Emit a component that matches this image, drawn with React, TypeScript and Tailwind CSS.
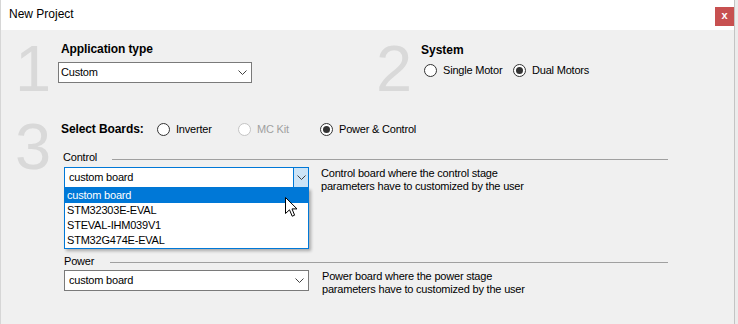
import React from "react";

const font = { fontFamily: '"Liberation Sans", Arial, sans-serif' };

function Chevron() {
  return (
    <svg width="9" height="5" viewBox="0 0 9 5" className="block">
      <polyline points="0.5,0.5 4.5,4.5 8.5,0.5" fill="none" stroke="#404040" strokeWidth="1" />
    </svg>
  );
}

function Radio({ checked = false, disabled = false, label, width }: { checked?: boolean; disabled?: boolean; label: string; width: string }) {
  return (
    <div className={`flex items-center h-[15px] ${width}`}>
      <div
        className={`w-[13px] h-[13px] rounded-full border bg-white flex items-center justify-center shrink-0 ${
          disabled ? "border-[#c4c4c4] bg-[#f7f7f7]" : "border-[#333333]"
        }`}
      >
        {checked && <div className="w-[7px] h-[7px] rounded-full bg-[#333333]" />}
      </div>
      <span
        className={`ml-[6px] text-[11px] leading-[15px] tracking-[-0.2px] whitespace-nowrap ${
          disabled ? "text-[#a0a0a0]" : "text-black"
        }`}
      >
        {label}
      </span>
    </div>
  );
}

function Digit({ d }: { d: string }) {
  return <div className="text-[65px] leading-none text-[#d9d9d9]">{d}</div>;
}

export default function App() {
  return (
    <div className="w-[738px] h-[324px] flex overflow-hidden bg-[#ececec]" style={font}>
      <div className="w-px h-full bg-[#d6d6d6]" />
      <div className="w-[733px] h-full flex flex-col">
        {/* title bar */}
        <div className="h-[30px] bg-white flex items-start justify-between">
          <div className="pl-[8px] pt-[7px] text-[12px] leading-[15px] text-black">New Project</div>
          <div className="mt-[7px] w-[19px] h-[19px] bg-[#c75050] flex items-center justify-center text-white text-[11px] font-bold leading-none pb-[2px]">
            x
          </div>
        </div>
        {/* body */}
        <div className="flex-1 bg-[#f0f0f0] flex flex-col">
          {/* row 1 + 2 */}
          <div className="flex h-[80px]">
            <div className="w-[369px] flex">
              <div className="w-[57px] pl-[14px] pt-[6px]">
                <Digit d="1" />
              </div>
              <div className="flex flex-col pt-[12px]">
                <div className="text-[12px] font-bold leading-[15px] text-black pl-[3px] tracking-[-0.1px]">Application type</div>
                <div className="mt-[5px] w-[194px] h-[21px] bg-white border border-[#7a7a7a] flex items-center justify-between">
                  <span className="pl-[2px] text-[11px] leading-[13px] tracking-[-0.2px] text-black">Custom</span>
                  <span className="pr-[4px]">
                    <Chevron />
                  </span>
                </div>
              </div>
            </div>
            <div className="flex">
              <div className="w-[51px] pl-[6px] pt-[6px]">
                <Digit d="2" />
              </div>
              <div className="flex flex-col pt-[13px]">
                <div className="text-[12px] font-bold leading-[15px] text-black">System</div>
                <div className="mt-[5px] ml-[3px] flex">
                  <Radio label="Single Motor" width="w-[89px]" />
                  <Radio label="Dual Motors" checked width="w-[90px]" />
                </div>
              </div>
            </div>
          </div>
          {/* row 3 */}
          <div className="flex">
            <div className="w-[57px] pl-[14px] pt-[4px]">
              <Digit d="3" />
            </div>
            <div className="flex flex-col pt-[12px]">
              <div className="flex items-center h-[15px]">
                <div className="w-[99px] pl-[3px] text-[12px] font-bold leading-[15px] tracking-[-0.1px] text-black whitespace-nowrap">
                  Select Boards:
                </div>
                <Radio label="Inverter" width="w-[81px]" />
                <Radio label="MC Kit" disabled width="w-[82px]" />
                <Radio label="Power & Control" checked width="w-[100px]" />
              </div>

              {/* Control group */}
              <div className="mt-[13px] flex items-start h-[15px]">
                <div className="w-[54px] pl-[5px] text-[11px] leading-[15px] tracking-[-0.2px] text-black">Control</div>
                <div className="mt-[9px] w-[556px] h-px bg-[#a0a0a0]" />
              </div>
              <div className="mt-[2px] flex items-start">
                <div className="relative ml-[6px]">
                  <div className="w-[245px] h-[21px] bg-white border border-[#0078d7] flex items-center justify-between">
                    <span className="pl-[4px] text-[11px] leading-[13px] tracking-[-0.2px] text-black">custom board</span>
                    <div className="w-[16px] h-[21px] -mr-px -my-px bg-[#cce4f7] border border-[#0078d7] flex items-center justify-center">
                      <Chevron />
                    </div>
                  </div>
                  <div className="absolute left-0 top-[21px] w-[245px] bg-white border border-t-0 border-[#0078d7] shadow-[2px_2px_3px_rgba(0,0,0,0.3)] z-10 text-[11px] leading-[15px] tracking-[-0.2px]">
                    <div className="h-[15px] bg-[#0078d7] text-white pl-[2px]">custom board</div>
                    <div className="h-[15px] text-black pl-[2px]">STM32303E-EVAL</div>
                    <div className="h-[15px] text-black pl-[2px]">STEVAL-IHM039V1</div>
                    <div className="h-[15px] text-black pl-[2px]">STM32G474E-EVAL</div>
                  </div>
                  {/* mouse cursor */}
                  <svg
                    className="absolute left-[221px] top-[30px] z-20"
                    width="13"
                    height="21"
                    viewBox="0 0 13 21"
                  >
                    <path
                      d="M0.5 0.5 L0.5 16.5 L4.5 12.8 L7.2 19.2 L9.6 18.2 L7 11.9 L12 11.9 Z"
                      fill="white"
                      stroke="black"
                      strokeWidth="1"
                      strokeLinejoin="miter"
                    />
                  </svg>
                </div>
                <div className="ml-[12px] text-[11px] leading-[13px] tracking-[-0.2px] text-black">
                  <div>Control board where the control stage</div>
                  <div>parameters have to customized by the user</div>
                </div>
              </div>

              {/* Power group */}
              <div className="mt-[61px] flex items-start h-[15px]">
                <div className="w-[52px] pl-[6px] text-[11px] leading-[15px] tracking-[-0.2px] text-black">Power</div>
                <div className="mt-[8px] w-[558px] h-px bg-[#a0a0a0]" />
              </div>
              <div className="mt-[1px] flex items-start">
                <div className="ml-[6px] w-[245px] h-[21px] bg-white border border-[#7a7a7a] flex items-center justify-between">
                  <span className="pl-[4px] text-[11px] leading-[13px] tracking-[-0.2px] text-black">custom board</span>
                  <span className="pr-[4px]">
                    <Chevron />
                  </span>
                </div>
                <div className="ml-[13px] text-[11px] leading-[13px] tracking-[-0.2px] text-black">
                  <div>Power board where the power stage</div>
                  <div>parameters have to customized by the user</div>
                </div>
              </div>
            </div>
          </div>
        </div>
      </div>
      <div className="w-px h-full bg-[#c4c4c4]" />
      <div className="flex-1 h-full bg-[#ececec]" />
    </div>
  );
}
